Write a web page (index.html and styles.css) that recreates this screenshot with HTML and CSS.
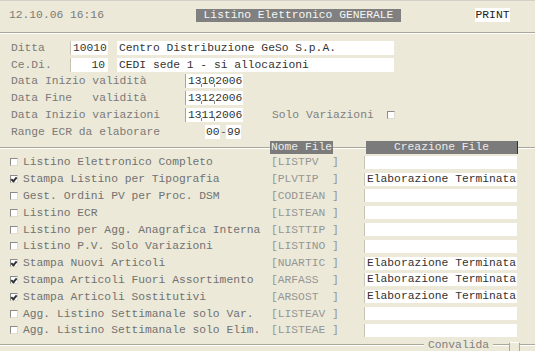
FILE: index.html
```html
<!DOCTYPE html>
<html lang="it">
<head>
    <meta charset="UTF-8">
    <title>Listino Elettronico GENERALE</title>
    <link rel="stylesheet" href="styles.css">
</head>
<body>
    <div class="screen">
        <div class="top">
            <span class="clock">12.10.06 16:16</span>
            <span class="title">Listino Elettronico GENERALE</span>
            <span class="print">PRINT</span>
        </div>
        <div class="sep"></div>

        <div class="form">
            <div class="row">
                <span class="lbl lbl-short">Ditta</span>
                <span class="fld code">10010</span>
                <span class="fld desc">Centro Distribuzione GeSo S.p.A.</span>
            </div>
            <div class="row">
                <span class="lbl lbl-short">Ce.Di.</span>
                <span class="fld code right">10</span>
                <span class="fld desc">CEDI sede 1 - si allocazioni</span>
            </div>
            <div class="row">
                <span class="lbl lbl-date">Data Inizio validità</span>
                <span class="fld date"><span class="dm">13</span><span class="dm">10</span>2006</span>
            </div>
            <div class="row">
                <span class="lbl lbl-date">Data Fine   validità</span>
                <span class="fld date"><span class="dm">13</span><span class="dm">12</span>2006</span>
            </div>
            <div class="row">
                <span class="lbl lbl-date">Data Inizio variazioni</span>
                <span class="fld date"><span class="dm">13</span><span class="dm">11</span>2006</span>
                <span class="lbl solo">Solo Variazioni</span>
                <span class="cb"></span>
            </div>
            <div class="row">
                <span class="lbl lbl-range">Range ECR da elaborare</span>
                <span class="fld rng">00</span><span class="dash">-</span><span class="fld rng">99</span>
            </div>
        </div>

        <div class="listhead">
            <span class="hbox nome">Nome File</span>
            <span class="hbox crea">Creazione File</span>
        </div>

        <ul class="list">
            <li><span class="cb"></span><span class="item">Listino Elettronico Completo</span><span class="file">[LISTPV  ]</span><span class="fld res"></span></li>
            <li><span class="cb on"></span><span class="item">Stampa Listino per Tipografia</span><span class="file">[PLVTIP  ]</span><span class="fld res">Elaborazione Terminata</span></li>
            <li><span class="cb"></span><span class="item">Gest. Ordini PV per Proc. DSM</span><span class="file">[CODIEAN ]</span><span class="fld res"></span></li>
            <li><span class="cb"></span><span class="item">Listino ECR</span><span class="file">[LISTEAN ]</span><span class="fld res"></span></li>
            <li><span class="cb"></span><span class="item">Listino per Agg. Anagrafica Interna</span><span class="file">[LISTTIP ]</span><span class="fld res"></span></li>
            <li><span class="cb"></span><span class="item">Listino P.V. Solo Variazioni</span><span class="file">[LISTINO ]</span><span class="fld res"></span></li>
            <li><span class="cb on"></span><span class="item">Stampa Nuovi Articoli</span><span class="file">[NUARTIC ]</span><span class="fld res">Elaborazione Terminata</span></li>
            <li><span class="cb on"></span><span class="item">Stampa Articoli Fuori Assortimento</span><span class="file">[ARFASS  ]</span><span class="fld res">Elaborazione Terminata</span></li>
            <li><span class="cb on"></span><span class="item">Stampa Articoli Sostitutivi</span><span class="file">[ARSOST  ]</span><span class="fld res">Elaborazione Terminata</span></li>
            <li><span class="cb"></span><span class="item">Agg. Listino Settimanale solo Var.</span><span class="file">[LISTEAV ]</span><span class="fld res"></span></li>
            <li><span class="cb"></span><span class="item">Agg. Listino Settimanale solo Elim.</span><span class="file">[LISTEAE ]</span><span class="fld res"></span></li>
        </ul>

        <div class="foot">
            <span class="line first"></span>
            <span class="convalida">Convalida</span>
            <span class="line short"></span>
            <span class="stub"></span>
            <span class="line"></span>
        </div>
    </div>
</body>
</html>
```

FILE: styles.css
```css
body {
    margin: 0;
    background-color: #ece9d8;
    font-family: "Liberation Mono", "Courier New", monospace;
    font-size: 11.3px;
    color: #777;
}
.screen {
    width: 535px;
    height: 351px;
    overflow: hidden;
    border-top: 1px solid #d4d0c8;
    box-sizing: border-box;
}
.top {
    display: flex;
    align-items: center;
    height: 26px;
    padding-top: 1px;
}
.clock {
    width: 187px;
    padding-left: 9px;
    color: #7a7a7a;
}
.title {
    width: 205px;
    height: 13px;
    line-height: 13px;
    text-align: center;
    background-color: #808080;
    color: #f6f6f6;
}
.print {
    margin-left: 74px;
    width: 35px;
    height: 14px;
    line-height: 14px;
    text-align: center;
    background-color: #fff;
    color: #222;
}
.sep {
    height: 1px;
    margin-top: 4px;
    background-color: #aca899;
    border-bottom: 1px solid #fff;
}

/* intestazione */
.form {
    padding-top: 5.4px;
}
.row {
    display: flex;
    align-items: center;
    height: 16.8px;
    white-space: pre;
}
.lbl {
    color: #7a7a7a;
}
.lbl-short { width: 59px; padding-left: 11px; }
.lbl-date { width: 174px; padding-left: 11px; }
.lbl-range { width: 194px; padding-left: 11px; }
.fld {
    display: block;
    height: 14px;
    line-height: 14px;
    background-color: #fff;
    color: #333;
    box-sizing: border-box;
    padding-left: 2px;
    white-space: pre;
}
.code {
    width: 38px;
    border-left: 1px solid #c8c4b4;
}
.right {
    text-align: right;
    padding-right: 3px;
}
.desc {
    width: 277px;
    margin-left: 9px;
}
.date {
    width: 58px;
    border-left: 1px solid #a8a49a;
}
.dm {
    position: relative;
}
.dm::after {
    content: "";
    position: absolute;
    right: 0;
    bottom: 0;
    width: 1px;
    height: 3px;
    background-color: #888;
}
.solo {
    margin-left: 29px;
    width: 115px;
    color: #808080;
}
.rng {
    width: 15px;
    padding-left: 1px;
}
.dash {
    width: 6px;
    text-align: center;
    color: #666;
}

/* checkbox */
.cb {
    display: block;
    width: 8px;
    height: 8px;
    box-sizing: border-box;
    background-color: #fff;
    border-top: 1px solid #8a8a8a;
    border-left: 1px solid #8a8a8a;
    border-right: 1px solid #e0ddd0;
    border-bottom: 1px solid #e0ddd0;
    position: relative;
}
.cb.on::after {
    content: "";
    position: absolute;
    left: 1px;
    top: 0;
    width: 2px;
    height: 4px;
    border-right: 2px solid #333;
    border-bottom: 2px solid #333;
    transform: rotate(40deg);
}

/* elenco */
.listhead {
    height: 13px;
    margin-top: 0.8px;
    display: flex;
    background: linear-gradient(to bottom, transparent 6px, #aca899 6px, #aca899 7px, #fff 7px, #fff 8px, transparent 8px);
}
.hbox {
    height: 13px;
    line-height: 13px;
    background-color: #7b7b7b;
    color: #ececec;
}
.nome {
    margin-left: 270px;
    width: 63px;
    text-align: center;
}
.crea {
    margin-left: 33px;
    width: 151px;
    text-align: center;
    border-right: 1px solid #333;
}
.list {
    list-style: none;
    margin: 0;
    padding: 0;
}
.list li {
    display: flex;
    align-items: center;
    height: 16.8px;
    padding-left: 10px;
    white-space: pre;
}
.item {
    margin-left: 5px;
    width: 248px;
    color: #727272;
}
.file {
    width: 93px;
    color: #959595;
}
.res {
    width: 153px;
    height: 13px;
    line-height: 13px;
    border-left: 1px solid #c8c4b4;
}

.foot {
    display: flex;
    align-items: center;
    height: 13px;
}
.line {
    flex: 1;
    height: 1px;
    background-color: #aca899;
    border-bottom: 1px solid #fff;
}
.line.first {
    flex: 0 0 424px;
}
.line.short {
    flex: 0 0 16px;
}
.convalida {
    padding: 0 4px;
    color: #808080;
}
.stub {
    align-self: flex-end;
    width: 11px;
    height: 10px;
    border-left: 1px solid #aca899;
    border-top: 1px solid #fff;
    border-right: 1px solid #aca899;
    box-sizing: border-box;
}
```
